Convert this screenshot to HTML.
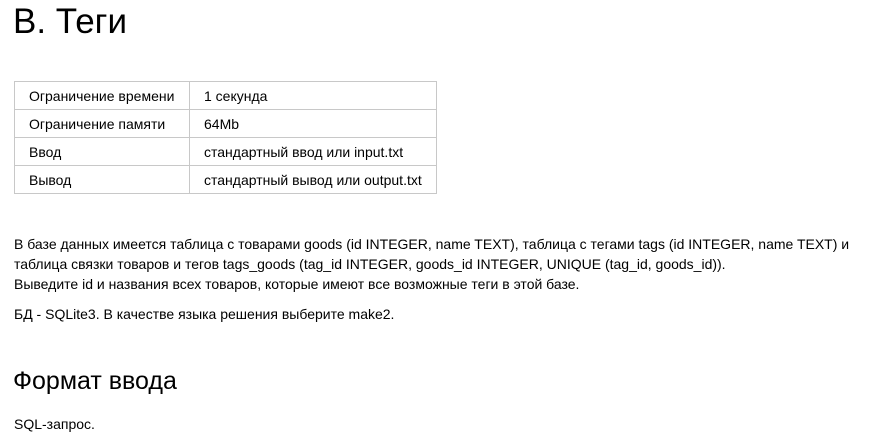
<!DOCTYPE html>
<html><head><meta charset="utf-8"><style>
body{margin:0;background:#fff;font-family:"Liberation Sans",sans-serif;color:#000;width:883px;height:448px;overflow:hidden;position:relative}
.a{position:absolute;white-space:nowrap}
h1{position:absolute;left:13px;top:1px;margin:0;font-size:35px;font-weight:normal;line-height:42px}
table{position:absolute;left:14px;top:81px;border-collapse:collapse;font-size:14px}
td{border:1px solid #c8c8c8;height:28px;padding:0 0 0 14px;box-sizing:border-box}
td.c1{width:175px}td.c2{width:247px}
p{margin:0;font-size:14px;line-height:20px}
</style></head><body>
<h1>B. Теги</h1>
<table>
<tr><td class="c1">Ограничение времени</td><td class="c2">1 секунда</td></tr>
<tr><td class="c1">Ограничение памяти</td><td class="c2">64Mb</td></tr>
<tr><td class="c1">Ввод</td><td class="c2">стандартный ввод или input.txt</td></tr>
<tr><td class="c1">Вывод</td><td class="c2">стандартный вывод или output.txt</td></tr>
</table>
<div class="a" style="left:14px;top:234px"><p>В базе данных имеется таблица с товарами goods (id INTEGER, name TEXT), таблица с тегами tags (id INTEGER, name TEXT) и<br>таблица связки товаров и тегов tags_goods (tag_id INTEGER, goods_id INTEGER, UNIQUE (tag_id, goods_id)).<br>Выведите id и названия всех товаров, которые имеют все возможные теги в этой базе.</p></div>
<div class="a" style="left:14px;top:304px"><p>БД - SQLite3. В качестве языка решения выберите make2.</p></div>
<div class="a" style="left:13px;top:366px;font-size:25px;line-height:30px">Формат ввода</div>
<div class="a" style="left:14px;top:414px"><p>SQL-запрос.</p></div>
</body></html>
